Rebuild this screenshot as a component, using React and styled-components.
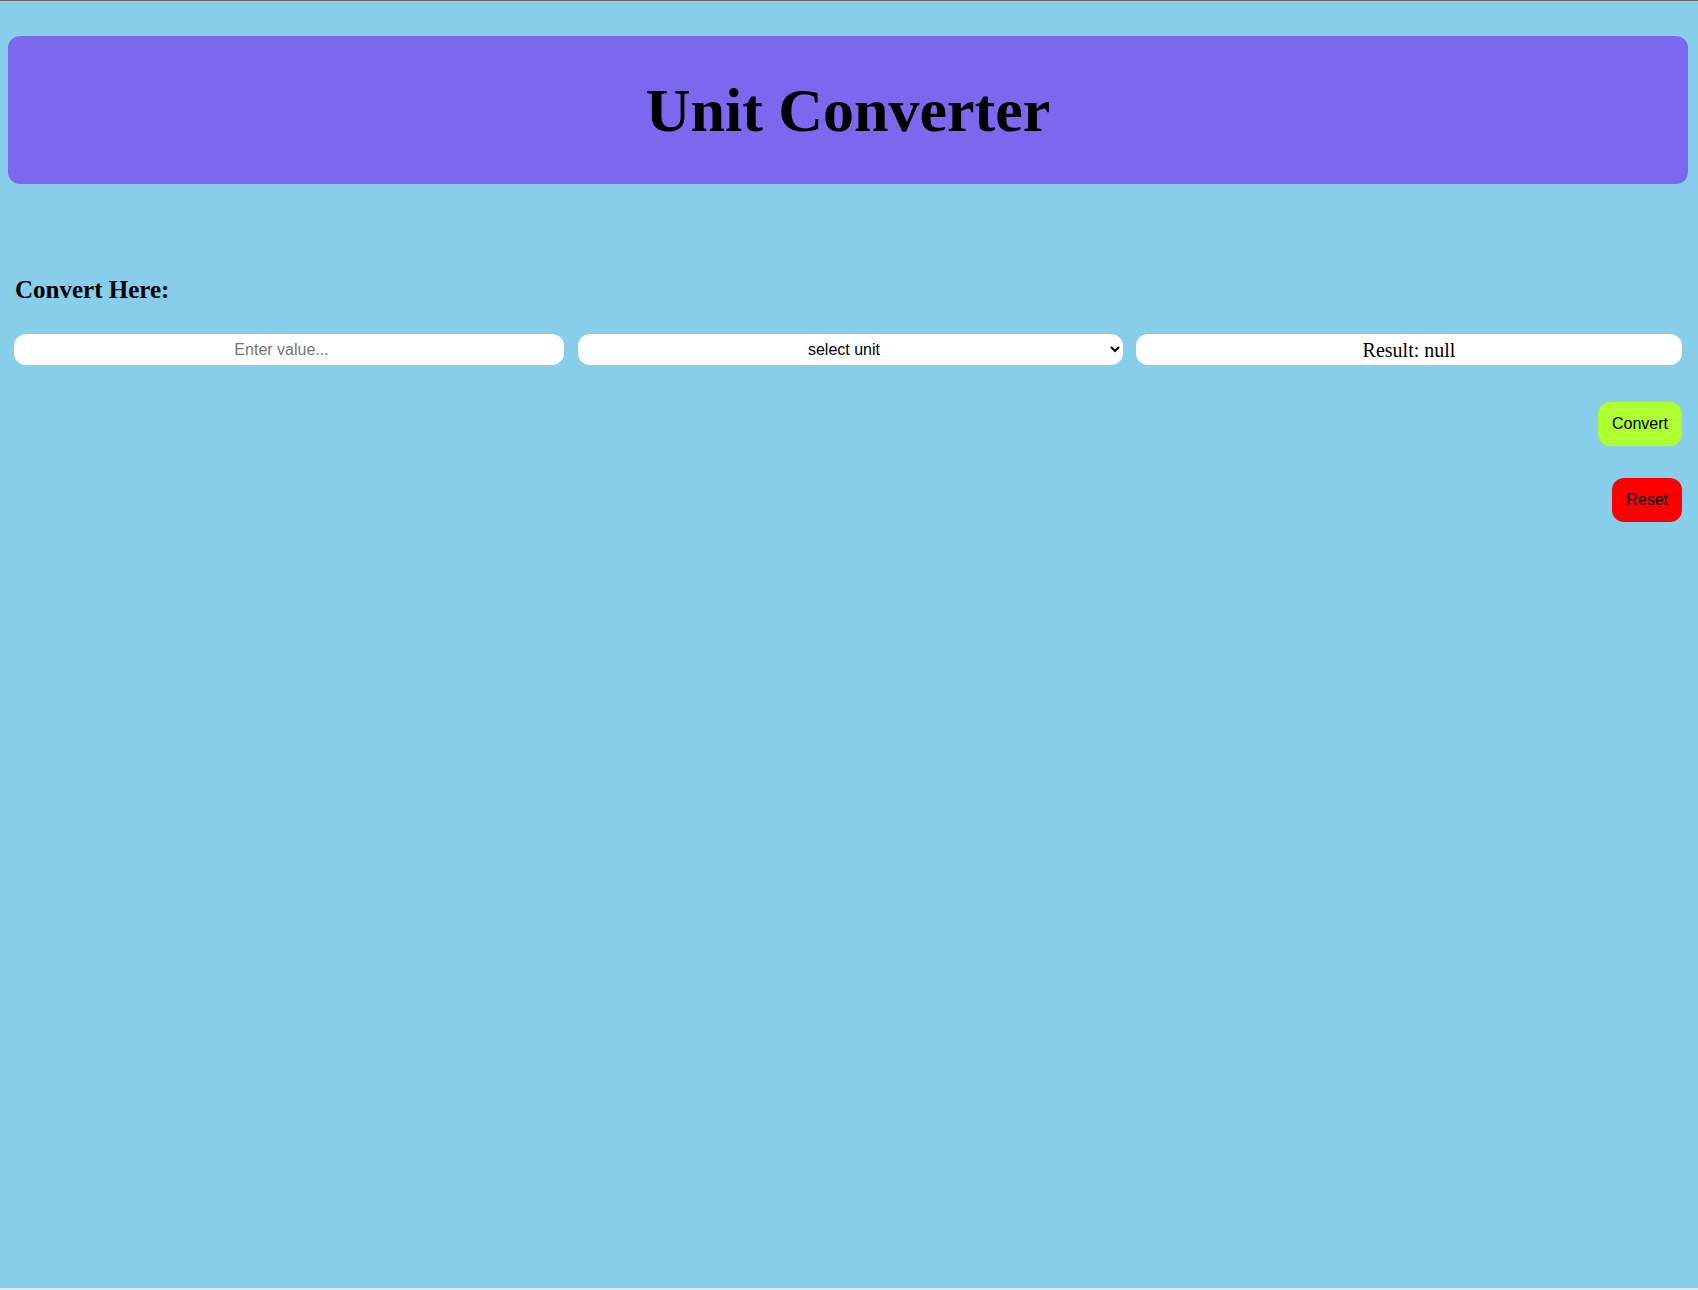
import React, { useState } from "react"
import styled, { createGlobalStyle } from "styled-components"

const GlobalStyle = createGlobalStyle`
  html {
    background: #dde9ee;
  }
  body {
    margin: 0;
    font-family: "Liberation Serif", "Times New Roman", serif;
  }
`

export default function App() {
  const [value, setValue] = useState("")
  const [unit, setUnit] = useState("")
  const [result, setResult] = useState(null)

  const convert = () => {
    const n = parseFloat(value)
    if (isNaN(n) || !unit) return setResult(null)
    const factors = { kmToM: 1000, mToKm: 0.001, kgToG: 1000, gToKg: 0.001 }
    setResult(n * factors[unit])
  }

  const reset = () => {
    setValue("")
    setUnit("")
    setResult(null)
  }

  return (
    <Page>
      <GlobalStyle />
      <Header>
        <Title>Unit Converter</Title>
      </Header>
      <Section>
        <Heading>Convert Here:</Heading>
        <Row>
          <ValueInput
            type="number"
            placeholder="Enter value..."
            value={value}
            onChange={(e) => setValue(e.target.value)}
          />
          <UnitSelect value={unit} onChange={(e) => setUnit(e.target.value)}>
            <option value="">select unit</option>
            <option value="kmToM">km to m</option>
            <option value="mToKm">m to km</option>
            <option value="kgToG">kg to g</option>
            <option value="gToKg">g to kg</option>
          </UnitSelect>
          <Result>Result: {result === null ? "null" : result}</Result>
        </Row>
        <Actions>
          <Button $bg="#adff2f" onClick={convert}>
            Convert
          </Button>
          <Button $bg="#ff0000" onClick={reset}>
            Reset
          </Button>
        </Actions>
      </Section>
    </Page>
  )
}

const Page = styled.div`
  box-sizing: border-box;
  height: 1288px;
  border-top: 1px solid #666;
  background: #87ceeb;
  padding: 35px 10px 0 8px;
`
const Header = styled.header`
  height: 148px;
  border-radius: 12px;
  background: #7b68ee;
  display: flex;
  align-items: center;
  justify-content: center;
`
const Title = styled.h1`
  margin: 0;
  font-size: 62px;
  font-weight: bold;
  color: #000;
`
const Section = styled.section`
  padding: 0 6px;
`
const Heading = styled.h2`
  margin: 92px 0 30px 1px;
  font-size: 25px;
  font-weight: bold;
  color: #000;
`
const Row = styled.div`
  display: grid;
  grid-template-columns: 550px 545px 546px;
  column-gap: 13.5px;
  height: 31px;
`
const ValueInput = styled.input`
  box-sizing: border-box;
  height: 31px;
  border: none;
  border-radius: 12px;
  background: #fff;
  outline: none;
  text-align: center;
  font-family: "Liberation Sans", Arial, sans-serif;
  font-size: 16px;
  color: #000;

  &::placeholder {
    color: #757575;
  }
`
const UnitSelect = styled.select`
  box-sizing: border-box;
  height: 31px;
  border: none;
  border-radius: 12px;
  background: #fff;
  outline: none;
  text-align: center;
  text-align-last: center;
  font-family: "Liberation Sans", Arial, sans-serif;
  font-size: 16px;
  color: #000;
`
const Result = styled.div`
  box-sizing: border-box;
  height: 31px;
  padding-top: 6px;
  border-radius: 12px;
  background: #fff;
  text-align: center;
  font-size: 20px;
  line-height: 21px;
  color: #000;
`
const Actions = styled.div`
  display: flex;
  flex-direction: column;
  align-items: flex-end;
  gap: 32px;
  margin-top: 37px;
`
const Button = styled.button`
  box-sizing: border-box;
  height: 44px;
  border: none;
  border-radius: 12px;
  padding: 0 14px;
  background: ${(p) => p.$bg};
  font-family: "Liberation Sans", Arial, sans-serif;
  font-size: 16px;
  color: #000;
  cursor: pointer;
`
